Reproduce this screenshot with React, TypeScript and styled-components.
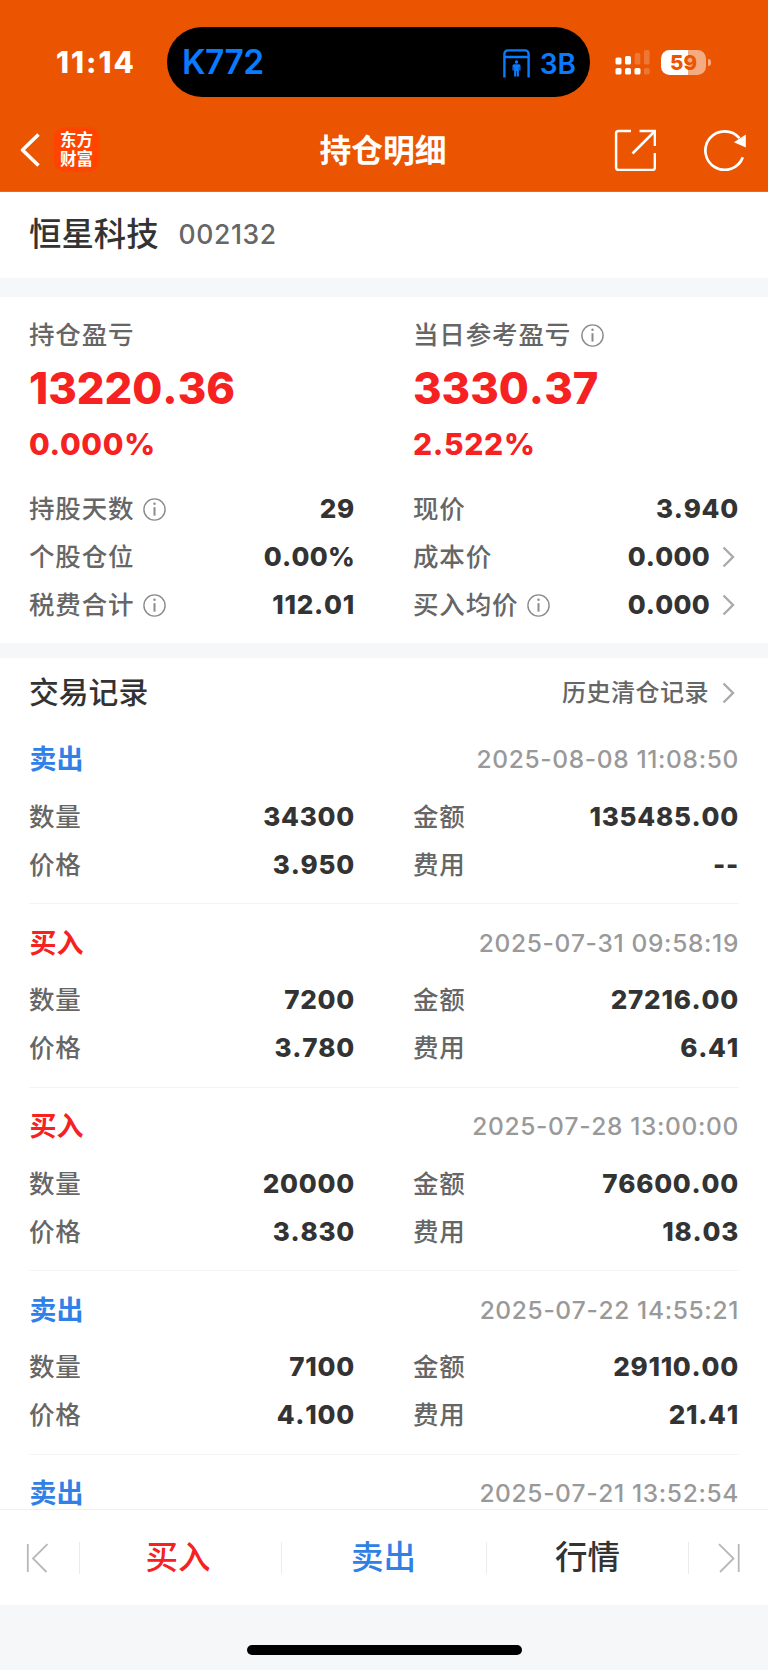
import React from "react";
import styled, { createGlobalStyle } from "styled-components";

const GlobalStyle = createGlobalStyle`
  * { box-sizing: border-box; }
  body {
    margin: 0;
    background: #fff;
    color: #333;
    font-family: Inter, "Noto Sans CJK SC", sans-serif;
  }
`;

const RED = "#f62222";
const BLUE = "#2f80e7";

const Screen = styled.div`
  width: 768px;
  height: 1670px;
  display: flex;
  flex-direction: column;
  overflow: hidden;
  background: #fff;
`;

const Header = styled.header`
  flex: none;
  height: 192px;
  padding-top: 27px;
  background: #eb5502;
  color: #fff;
  border-bottom: 1px solid #ee6a20;
`;

const StatusBar = styled.div`
  display: flex;
  align-items: center;
  height: 70px;
  padding-left: 56px;
`;

const Clock = styled.div`
  width: 111px;
  font-size: 29.5px;
  font-weight: 800;
  line-height: 40px;
  letter-spacing: 2px;
`;

const Island = styled.div`
  display: flex;
  align-items: center;
  width: 423px;
  height: 70px;
  padding: 2px 14px 0 15px;
  border-radius: 35px;
  background: #000;
  color: #0a7aff;
  font-weight: 600;
`;

const TrainNumber = styled.span`
  flex: 1;
  padding-bottom: 2px;
  font-size: 33.5px;
  letter-spacing: -0.5px;
`;

const Gate = styled.span`
  padding: 2px 0 0 10px;
  font-size: 28px;
`;

const Signal = styled.svg`
  margin-left: 25px;
`;

const Battery = styled.div`
  position: relative;
  display: flex;
  align-items: center;
  justify-content: center;
  width: 45px;
  height: 25px;
  margin-left: 10px;
  border-radius: 8.5px;
  background: linear-gradient(90deg, #fff 60%, #f5ab82 60%);
  color: #eb5502;
  font-size: 20.5px;
  font-weight: 800;
  line-height: 25px;

  &::after {
    content: "";
    position: absolute;
    right: -5px;
    top: 9px;
    width: 3px;
    height: 7px;
    border-radius: 0 4px 4px 0;
    background: #f5ab82;
  }
`;

const NavBar = styled.div`
  display: flex;
  align-items: center;
  justify-content: space-between;
  height: 94px;
  padding: 11px 21px 0 19px;
`;

const NavSide = styled.div<{ $end?: boolean }>`
  display: flex;
  flex: 1;
  align-items: center;
  justify-content: ${(p) => (p.$end ? "flex-end" : "flex-start")};
  gap: ${(p) => (p.$end ? "47px" : "12px")};
`;

const AppLogo = styled.div`
  display: grid;
  place-content: center;
  width: 45px;
  height: 45px;
  padding-bottom: 1px;
  border-radius: 10px;
  background: #ff4400;
  font-family: "Noto Sans CJK SC", sans-serif;
  font-size: 16.5px;
  font-weight: 700;
  line-height: 19px;
`;

const Title = styled.h1`
  margin: 0;
  padding-top: 2px;
  font-size: 31.8px;
  font-weight: 700;
  line-height: 44px;
`;

const StockHeading = styled.section`
  display: flex;
  flex: none;
  align-items: center;
  gap: 20px;
  height: 86px;
  padding: 0 29px 3px;
`;

const StockName = styled.h2`
  margin: 0;
  padding-top: 3px;
  font-size: 32.4px;
  font-weight: 500;
  line-height: 44px;
`;

const StockCode = styled.span`
  color: #666;
  font-size: 26.5px;
  font-weight: 500;
  letter-spacing: 0.6px;
  line-height: 44px;
`;

const Band = styled.div<{ $height: number }>`
  flex: none;
  height: ${(p) => p.$height}px;
  background: #f6f7f9;
`;

const Summary = styled.section`
  flex: none;
  height: 346px;
  padding: 18px 29px 0;
`;

const Columns = styled.div`
  display: grid;
  grid-template-columns: 1fr 1fr;
  column-gap: 58px;
`;

const Label = styled.span<{ $raised?: boolean }>`
  display: flex;
  align-items: center;
  gap: ${(p) => (p.$raised ? 10 : 9)}px;
  color: #666;
  font-size: 25.5px;
  font-weight: 500;
  letter-spacing: 0.85px;
  line-height: 40px;
  white-space: nowrap;

  svg { margin-top: ${(p) => (p.$raised ? 0 : 1)}px; }
`;

const BigNumber = styled.div`
  color: ${RED};
  font-size: 43.5px;
  font-weight: 800;
  font-kerning: none;
  line-height: 66px;
`;

const Percent = styled.div`
  padding-top: 1px;
  color: ${RED};
  font-size: 30px;
  font-weight: 800;
  letter-spacing: 0.7px;
  line-height: 45px;
`;

const DetailGrid = styled(Columns)<{ $top: number }>`
  grid-auto-rows: 48px;
  margin-top: ${(p) => p.$top}px;
`;

const Row = styled.div`
  display: flex;
  align-items: center;
  justify-content: space-between;
`;

const Value = styled.span<{ $tight?: boolean }>`
  display: flex;
  align-items: center;
  gap: 12px;
  font-size: 26px;
  font-weight: 800;
  font-kerning: none;
  letter-spacing: ${(p) => (p.$tight ? 0.25 : 0.75)}px;
  line-height: 40px;

  svg { margin-right: 4px; }
`;

const Records = styled.section`
  flex: 1;
  min-height: 0;
  overflow: hidden;
  padding: 0 29px;
`;

const RecordsHead = styled(Row)`
  height: 70px;
`;

const RecordsTitle = styled.h2`
  margin: 0;
  padding-bottom: 2px;
  font-size: 29.8px;
  font-weight: 500;
  line-height: 40px;
`;

const HistoryLink = styled.a`
  display: flex;
  align-items: center;
  gap: 13px;
  color: #666;
  font-size: 24px;
  font-weight: 500;
  letter-spacing: 0.5px;
  line-height: 40px;

  svg { margin-right: 4px; }
`;

const TradeList = styled.div`
  margin-top: -7.5px;
`;

const Trade = styled.article`
  height: 183.5px;
  padding-top: 17.5px;
  border-bottom: 1px solid #f4f4f5;
`;

const TradeHead = styled(Row)`
  height: 42px;
`;

const Side = styled.strong<{ $buy: boolean }>`
  padding: 2px 0 0 0.5px;
  color: ${(p) => (p.$buy ? RED : BLUE)};
  font-size: 27px;
  font-weight: 700;
  line-height: 40px;
`;

const Time = styled.time`
  color: #999;
  font-size: 24.5px;
  font-weight: 500;
  font-kerning: none;
  letter-spacing: 0.65px;
  line-height: 40px;
`;

const BottomBar = styled.nav`
  display: grid;
  flex: none;
  grid-template-columns: 80px 202px 205px 202px 79px;
  align-items: center;
  height: 96px;
  border-top: 1px solid #f0f0f1;
`;

const BarItem = styled.button<{ $color?: string; $shift?: number }>`
  display: flex;
  align-items: center;
  justify-content: center;
  height: 32px;
  padding: 0 ${(p) => Math.max(0, -(p.$shift ?? 0))}px 0 ${(p) => Math.max(0, p.$shift ?? 0)}px;
  border: 0;
  border-right: 1px solid #ececee;
  background: none;
  color: ${(p) => p.$color ?? "#333"};
  font: 500 32.5px/32px Inter, "Noto Sans CJK SC", sans-serif;

  &:last-child { border-right: 0; }
`;

const Footer = styled.footer`
  display: flex;
  flex: none;
  justify-content: center;
  height: 65px;
  padding-top: 40px;
  background: #f6f7f9;
`;

const HomeIndicator = styled.div`
  width: 275px;
  height: 10px;
  border-radius: 5px;
  background: #000;
`;

const InfoIcon = () => (
  <svg width="23" height="23" viewBox="0 0 23 23" fill="none" stroke="#8a8a8a" strokeWidth="1.4">
    <circle cx="11.5" cy="11.5" r="10.6" />
    <path d="M11.5 9.2v8.4" strokeWidth="2" />
    <circle cx="11.5" cy="5.8" r="1.2" fill="#8a8a8a" stroke="none" />
  </svg>
);

const Chevron = () => (
  <svg width="13" height="22" viewBox="0 0 13 22" fill="none" stroke="#aaa" strokeWidth="2.4">
    <path d="M1.5 1.5 11 11 1.5 20.5" />
  </svg>
);

const SkipIcon = ({ forward }: { forward?: boolean }) => (
  <svg width="23" height="30" viewBox="0 0 23 30" fill="none" stroke="#b8b8b8" strokeWidth="1.8">
    {forward ? (
      <path d="M1 1.2 15.5 15.5 2 29M20.7 1v28" />
    ) : (
      <path d="M21.5 1.2 7 15.5 20.5 29M1.8 1v28" />
    )}
  </svg>
);

const trades = [
  { buy: false, time: "2025-08-08 11:08:50", qty: "34300", amount: "135485.00", price: "3.950", fee: "--" },
  { buy: true, time: "2025-07-31 09:58:19", qty: "7200", amount: "27216.00", price: "3.780", fee: "6.41" },
  { buy: true, time: "2025-07-28 13:00:00", qty: "20000", amount: "76600.00", price: "3.830", fee: "18.03" },
  { buy: false, time: "2025-07-22 14:55:21", qty: "7100", amount: "29110.00", price: "4.100", fee: "21.41" },
  { buy: false, time: "2025-07-21 13:52:54", qty: "", amount: "", price: "", fee: "" },
];

type DetailProps = { label: string; value: string; info?: boolean; link?: boolean };

const Detail = ({ label, value, info, link }: DetailProps) => (
  <Row>
    <Label>
      {label}
      {info && <InfoIcon />}
    </Label>
    <Value $tight={value.startsWith("0.0")}>
      {value}
      {link && <Chevron />}
    </Value>
  </Row>
);

export default function App() {
  return (
    <Screen>
      <GlobalStyle />
      <Header>
        <StatusBar>
          <Clock>11:14</Clock>
          <Island>
            <TrainNumber>K772</TrainNumber>
            <svg width="27" height="29" viewBox="0 0 27 29" fill="none" stroke="#0a7aff" strokeWidth="2.4">
              <path d="M1.4 28.5V5A3.6 3.6 0 0 1 5 1.4h17A3.6 3.6 0 0 1 25.6 5v23.5M1.4 8h24.2" />
              <circle cx="13.5" cy="13" r="1.7" fill="#0a7aff" stroke="none" />
              <path
                d="M11 15.3h5q1.5 0 1.5 1.5v4.7h-1.3v-3.5h-.3v9.5h-2.1v-5.5h-.6v5.5h-2.1v-9.5h-.3v3.500H9.500v-4.700q0-1.500 1.500-1.500z"
                fill="#0a7aff"
                stroke="none"
              />
            </svg>
            <Gate>3B</Gate>
          </Island>
          <Signal width="36" height="26" viewBox="0 0 36 26" fill="#fff">
            <rect x="0.5" y="8.5" width="6" height="7" rx="1.6" />
            <rect x="10" y="7" width="6" height="8.5" rx="1.6" />
            <rect x="19.7" y="4" width="5.6" height="11.5" rx="1.6" opacity="0.2" />
            <rect x="29" y="1" width="5.6" height="14.5" rx="1.6" opacity="0.2" />
            <rect x="0.5" y="19" width="6" height="6.5" rx="1.6" />
            <rect x="10" y="19" width="6" height="6.5" rx="1.6" />
            <rect x="19.5" y="19" width="6" height="6.5" rx="1.6" />
            <rect x="29" y="19" width="5.6" height="6.5" rx="1.6" opacity="0.2" />
          </Signal>
          <Battery>59</Battery>
        </StatusBar>
        <NavBar>
          <NavSide>
            <svg width="23" height="34" viewBox="0 0 23 34" fill="none" stroke="#fff" strokeWidth="3.6">
              <path d="M19.5 1.5 3.5 17l16 15.5" strokeLinejoin="round" />
            </svg>
            <AppLogo>
              <span>东方</span>
              <span>财富</span>
            </AppLogo>
          </NavSide>
          <Title>持仓明细</Title>
          <NavSide $end>
            <svg width="42" height="42" viewBox="0 0 42 42" fill="none" stroke="#fff" strokeWidth="2.5">
              <path d="M17 2.1H4.5a2.4 2.4 0 0 0-2.4 2.4v34a2.4 2.4 0 0 0 2.4 2.4h34a2.4 2.4 0 0 0 2.4-2.4V24M25.5 2.1h15.4V17M40.5 2.5 18.5 24.5" />
            </svg>
            <svg width="44" height="42" viewBox="0 0 44 42" fill="none" stroke="#fff" strokeWidth="2.7">
              <path d="M39.8 28.3A19.3 19.3 0 1 1 36.5 9.2" />
              <path d="M42.8 5.5v13L31 13.3z" fill="#fff" stroke="none" />
            </svg>
          </NavSide>
        </NavBar>
      </Header>

      <StockHeading>
        <StockName>恒星科技</StockName>
        <StockCode>002132</StockCode>
      </StockHeading>
      <Band $height={19} />

      <Summary>
        <Columns>
          <div>
            <Label>持仓盈亏</Label>
            <BigNumber>13220.36</BigNumber>
            <Percent>0.000%</Percent>
          </div>
          <div>
            <Label $raised>
              当日参考盈亏
              <InfoIcon />
            </Label>
            <BigNumber>3330.37</BigNumber>
            <Percent>2.522%</Percent>
          </div>
        </Columns>
        <DetailGrid $top={18}>
          <Detail label="持股天数" value="29" info />
          <Detail label="现价" value="3.940" />
          <Detail label="个股仓位" value="0.00%" />
          <Detail label="成本价" value="0.000" link />
          <Detail label="税费合计" value="112.01" info />
          <Detail label="买入均价" value="0.000" info link />
        </DetailGrid>
      </Summary>
      <Band $height={15} />

      <Records>
        <RecordsHead>
          <RecordsTitle>交易记录</RecordsTitle>
          <HistoryLink>
            历史清仓记录
            <Chevron />
          </HistoryLink>
        </RecordsHead>
        <TradeList>
          {trades.map((t) => (
            <Trade key={t.time}>
              <TradeHead>
                <Side $buy={t.buy}>{t.buy ? "买入" : "卖出"}</Side>
                <Time>{t.time}</Time>
              </TradeHead>
              {t.qty && (
                <DetailGrid $top={12.5}>
                  <Detail label="数量" value={t.qty} />
                  <Detail label="金额" value={t.amount} />
                  <Detail label="价格" value={t.price} />
                  <Detail label="费用" value={t.fee} />
                </DetailGrid>
              )}
            </Trade>
          ))}
        </TradeList>
      </Records>

      <BottomBar>
        <BarItem $shift={-5} aria-label="上一只">
          <SkipIcon />
        </BarItem>
        <BarItem $color={RED} $shift={-5}>买入</BarItem>
        <BarItem $color={BLUE} $shift={-1}>卖出</BarItem>
        <BarItem>行情</BarItem>
        <BarItem $shift={2} aria-label="下一只">
          <SkipIcon forward />
        </BarItem>
      </BottomBar>
      <Footer>
        <HomeIndicator />
      </Footer>
    </Screen>
  );
}
